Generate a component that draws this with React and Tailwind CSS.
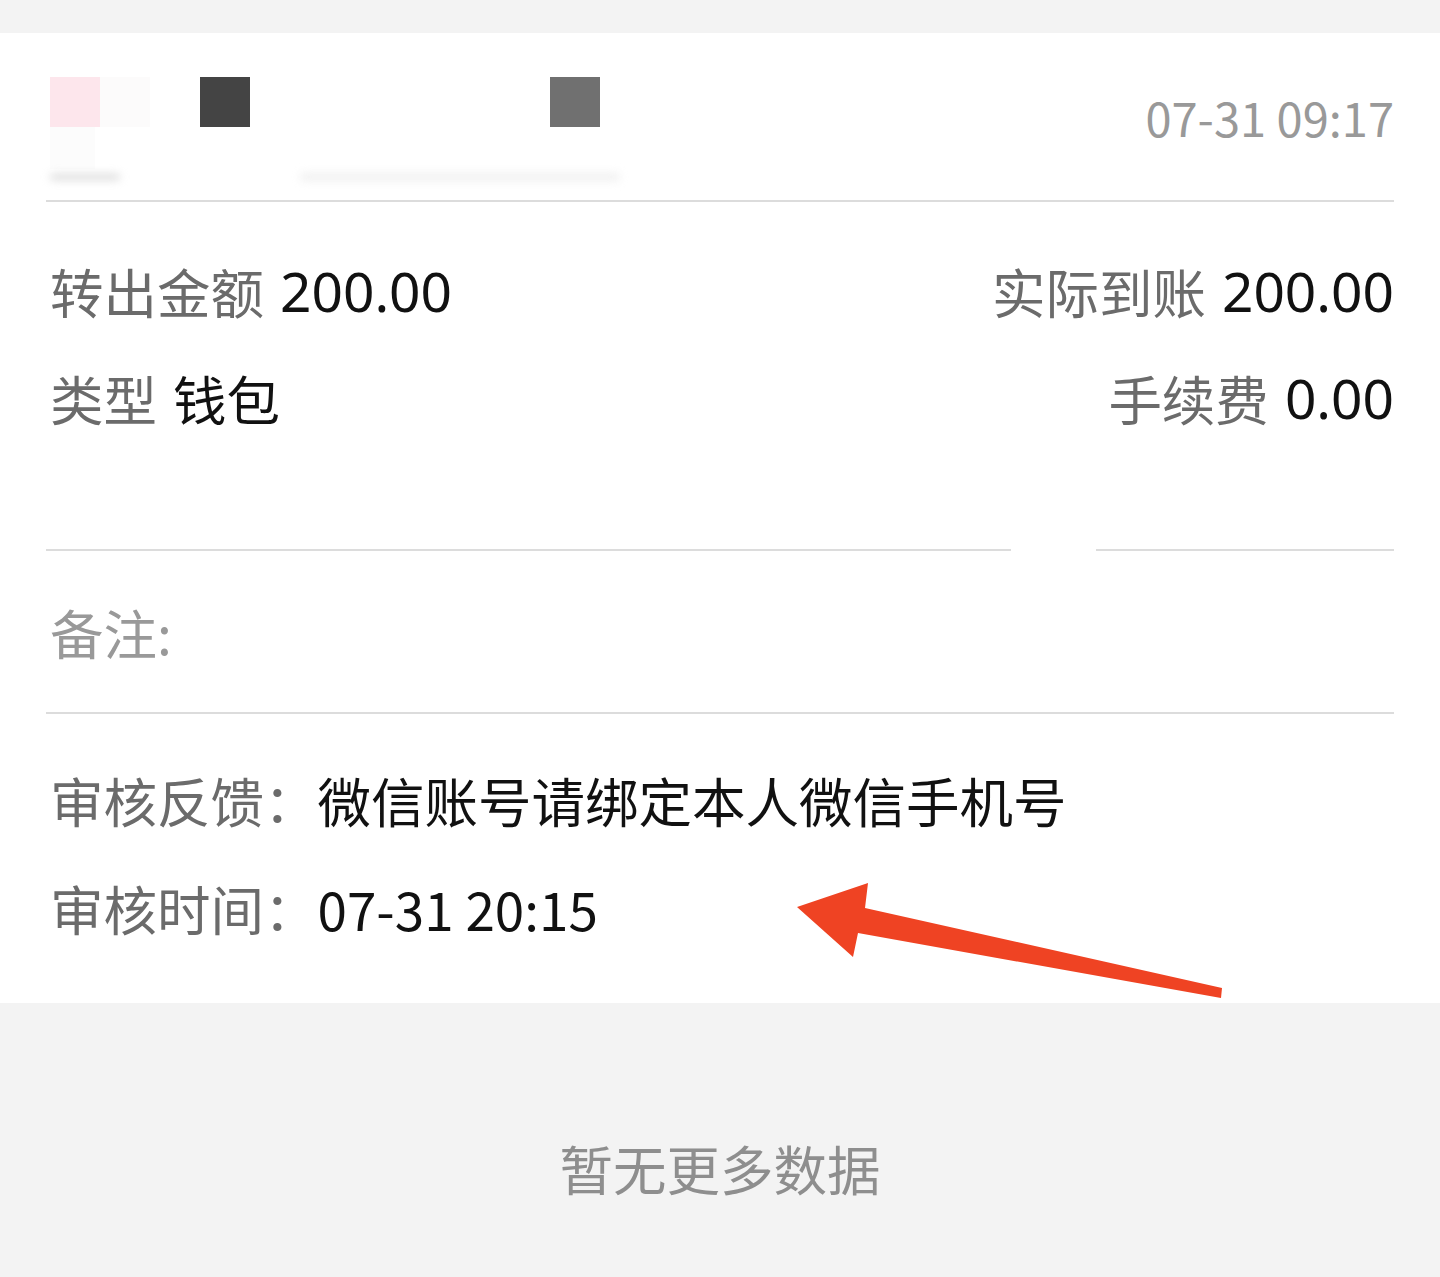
import React from 'react';

const FONT = "font-['Noto_Sans_CJK_SC','Noto_Sans',sans-serif]";
const NUM = "font-['Noto_Sans','Noto_Sans_CJK_SC',sans-serif] text-[55px]";

function Divider() {
  return <div className="mx-[46px] h-[2px] bg-[#dcdcdc]" />;
}

function InfoRow({ label, value, numeric, right }) {
  return (
    <div className={`flex h-[107px] items-center gap-[16px] ${right ? 'justify-end' : ''}`}>
      <span className="text-[#6b6b6b]">{label}</span>
      <span className={`text-[#111] ${numeric ? NUM : ''}`}>{value}</span>
    </div>
  );
}

function AuditRow({ label, value, numeric }) {
  return (
    <div className="flex h-[108px] items-center">
      <span className="text-[#6b6b6b]">{label}：</span>
      <span className={`text-[#111] ${numeric ? 'text-[53px]' : ''}`}>{value}</span>
    </div>
  );
}

export default function App() {
  return (
    <div className={`relative w-[1440px] h-[1277px] bg-[#f3f3f3] ${FONT} text-[53.5px] leading-none`}>
      <div className="h-[33px] bg-[#f3f3f3]" />

      <div className="bg-white">
        {/* header, names are masked */}
        <div className="flex h-[167px] items-start justify-between pl-[50px] pr-[46px] pt-[44px]">
          <div className="flex flex-col">
            <div className="flex">
              <div className="h-[50px] w-[50px] bg-[#fde6ec]" />
              <div className="h-[50px] w-[50px] bg-[#fcfbfb]" />
              <div className="ml-[50px] h-[50px] w-[50px] bg-[#444]" />
              <div className="ml-[300px] h-[50px] w-[50px] bg-[#707070]" />
            </div>
            <div className="h-[42px] w-[45px] bg-[#fcfcfc]" />
            <div className="mt-[5px] flex">
              <div className="h-[6px] w-[70px] rounded-full bg-[#dadada] blur-[4px]" />
              <div className="ml-[180px] h-[6px] w-[320px] rounded-full bg-[#ebebeb] blur-[5px]" />
            </div>
          </div>
          <div className="mt-[16px] text-[47px] text-[#999]">07-31 09:17</div>
        </div>
        <Divider />

        <div className="flex justify-between pl-[50px] pr-[46px] pt-[35px] pb-[98px]">
          <div>
            <InfoRow label="转出金额" value="200.00" numeric />
            <InfoRow label="类型" value="钱包" />
          </div>
          <div>
            <InfoRow label="实际到账" value="200.00" numeric right />
            <InfoRow label="手续费" value="0.00" numeric right />
          </div>
        </div>
        <div className="mx-[46px] flex h-[2px]">
          <div className="w-[965px] bg-[#dcdcdc]" />
          <div className="w-[85px]" />
          <div className="flex-1 bg-[#dcdcdc]" />
        </div>

        <div className="flex h-[161px] items-center px-[50px] text-[#999]">备注:</div>
        <Divider />

        <div className="px-[50px] pt-[32px] pb-[41px]">
          <AuditRow label="审核反馈" value="微信账号请绑定本人微信手机号" />
          <AuditRow label="审核时间" value="07-31 20:15" numeric />
        </div>
      </div>

      <div className="flex h-[274px] justify-center pt-[138px] text-[#8e8e8e]">暂无更多数据</div>

      {/* red annotation arrow */}
      <svg className="absolute left-0 top-0" width="1440" height="1277" viewBox="0 0 1440 1277">
        <polygon
          points="797,907 868,883 865,908 1222,988 1221,998 858,933 853,957"
          fill="#ef4323"
        />
      </svg>
    </div>
  );
}
